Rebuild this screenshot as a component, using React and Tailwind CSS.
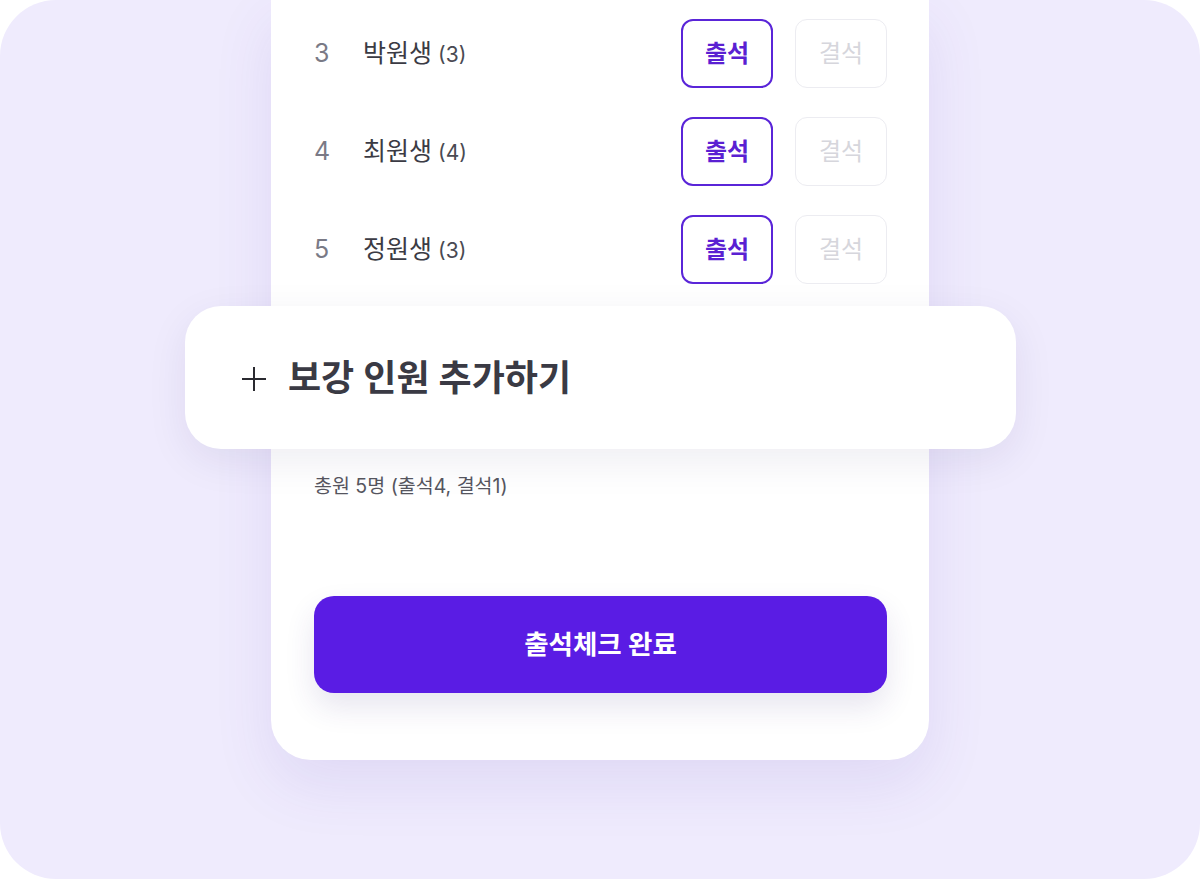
import React from 'react';

const students = [
  { no: 3, name: '박원생', count: 3 },
  { no: 4, name: '최원생', count: 4 },
  { no: 5, name: '정원생', count: 3 },
];

function StudentRow({ student }) {
  return (
    <div className="flex items-center h-[69px]">
      <span className="w-[49px] text-[25px] text-[#7a7a86]">{student.no}</span>
      <span className="text-[25px] text-[#3b3b44]">{student.name}</span>
      <span className="ml-[6px] text-[21px] text-[#4a4a52] mt-[2px]">({student.count})</span>
      <div className="ml-auto flex gap-[22px]">
        <button className="w-[92px] h-[69px] rounded-[12px] border-2 border-[#5a25d8] text-[#5a20d2] text-[24px] font-bold">
          출석
        </button>
        <button className="w-[92px] h-[69px] rounded-[12px] border-[1.5px] border-[#ececf1] text-[#d6d6dc] text-[24px]">
          결석
        </button>
      </div>
    </div>
  );
}

export default function App() {
  return (
    <div
      className="w-[1200px] h-[879px] bg-white overflow-hidden"
      style={{ fontFamily: 'Inter, "Noto Sans CJK KR", sans-serif' }}
    >
      <div className="w-full h-full rounded-[56px] bg-[#efebfd] flex flex-col items-center overflow-hidden">
        <div className="w-[658px] bg-white rounded-b-[40px] shadow-[0_24px_60px_rgba(90,60,180,0.10)] pl-[43px] pr-[42px] pt-[19px] pb-[67px] flex flex-col">
          <div className="flex flex-col gap-[29px]">
            {students.map((s) => (
              <StudentRow key={s.no} student={s} />
            ))}
          </div>

          <div className="mt-[22px] -mx-[129px] h-[143px] bg-white rounded-[36px] shadow-[0_12px_40px_rgba(40,30,90,0.08)] flex items-center pl-[56px]">
            <svg width="26" height="26" viewBox="0 0 26 26" className="mt-[2px]">
              <path d="M13 1v24M1 13h24" stroke="#2a2a30" strokeWidth="2" />
            </svg>
            <span className="ml-[21px] text-[36px] font-semibold text-[#3a3a44]">
              보강 인원 추가하기
            </span>
          </div>

          <p className="mt-[23px] text-[19.5px] text-[#55555e] leading-[28px]">
            총원 5명 (출석4, 결석1)
          </p>

          <button className="mt-[96px] h-[97px] w-full rounded-[20px] bg-[#5a1ce4] text-white text-[26.5px] font-bold shadow-[0_14px_30px_rgba(60,40,120,0.12)]">
            출석체크 완료
          </button>
        </div>
      </div>
    </div>
  );
}
